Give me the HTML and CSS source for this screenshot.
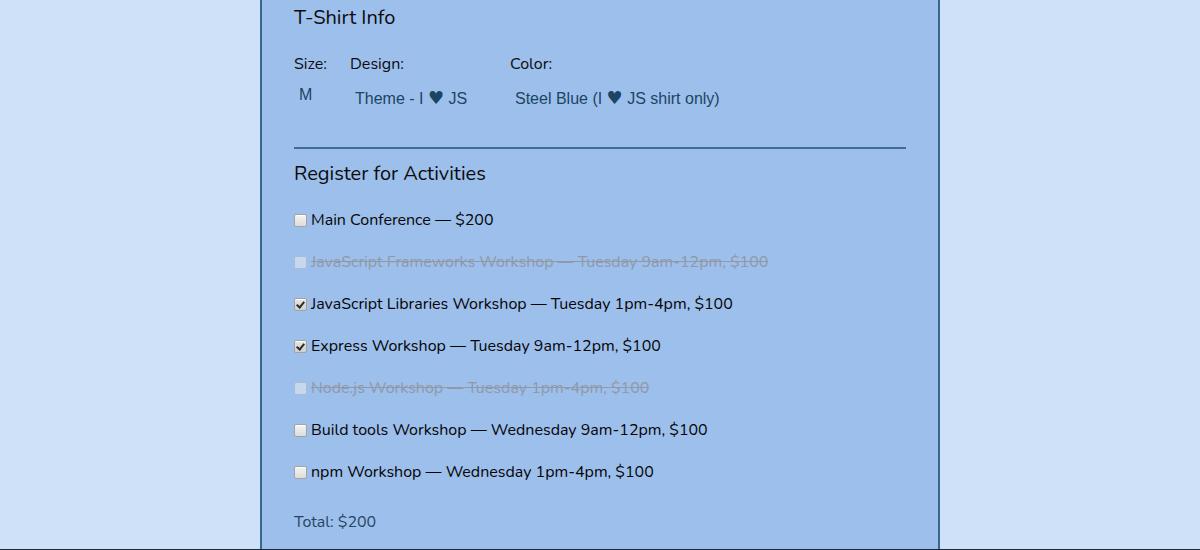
FILE: index.html
```html
<!DOCTYPE html>
<html>
<head>
<meta charset="utf-8">
<link rel="stylesheet" href="styles.css">
</head>
<body>
<div class="page">
  <form class="panel">
    <section class="shirt">
      <h2 class="legend">T-Shirt Info</h2>
      <div class="fields">
        <div class="field f-size">
          <span class="label">Size:</span>
          <span class="value v-size">M</span>
        </div>
        <div class="field f-design">
          <span class="label">Design:</span>
          <span class="value">Theme - I <span class="heart">♥</span> JS</span>
        </div>
        <div class="field f-color">
          <span class="label">Color:</span>
          <span class="value">Steel Blue (I <span class="heart">♥</span> JS shirt only)</span>
        </div>
      </div>
    </section>
    <hr class="rule">
    <section class="activities">
      <h2 class="legend">Register for Activities</h2>
      <label class="act"><span class="box"></span>Main Conference — $200</label>
      <label class="act disabled"><span class="box"></span>JavaScript Frameworks Workshop — Tuesday 9am-12pm, $100</label>
      <label class="act"><span class="box checked"></span>JavaScript Libraries Workshop — Tuesday 1pm-4pm, $100</label>
      <label class="act"><span class="box checked"></span>Express Workshop — Tuesday 9am-12pm, $100</label>
      <label class="act disabled"><span class="box"></span>Node.js Workshop — Tuesday 1pm-4pm, $100</label>
      <label class="act"><span class="box"></span>Build tools Workshop — Wednesday 9am-12pm, $100</label>
      <label class="act"><span class="box"></span>npm Workshop — Wednesday 1pm-4pm, $100</label>
      <p class="total">Total: $200</p>
    </section>
  </form>
</div>
<div class="bottom-line"></div>
</body>
</html>
```

FILE: styles.css
```css
html, body {
  margin: 0;
  padding: 0;
  height: 550px;
  overflow: hidden;
  background: #cfe0f9;
  font-family: "Nunito", Lato, "Noto Sans", sans-serif;
}

.page {
  height: 549px;
  display: flex;
  justify-content: center;
}

.bottom-line {
  height: 1px;
  background: #1f2a38;
}

.panel {
  width: 612px;
  padding: 0 32px;
  background: #9dbfec;
  border-left: 2px solid #38678b;
  border-right: 2px solid #38678b;
  box-sizing: content-box;
}

.legend {
  margin: 0;
  font-weight: 400;
  font-size: 20px;
  line-height: 24px;
  color: #0c0c0c;
}

.shirt .legend {
  padding-top: 6px;
}

.fields {
  display: flex;
  margin-top: 24px;
}

.field {
  display: flex;
  flex-direction: column;
}

.f-size { width: 56px; }
.f-design { width: 160px; }

.label {
  font-size: 16px;
  line-height: 20px;
  color: #0c0c0c;
}

.value {
  margin-top: 16px;
  padding-left: 5px;
  font-family: "Liberation Sans", Arial, "DejaVu Sans", sans-serif;
  font-size: 16px;
  line-height: 18px;
  color: #1b4563;
}

.heart {
  font-family: "DejaVu Sans", sans-serif;
  font-size: 18px;
  line-height: 0;
}

.v-size {
  margin-top: 12px;
}

.rule {
  margin: 39px 0 0 0;
  border: 0;
  height: 2px;
  background: #3e6e8f;
}

.activities .legend {
  margin-top: 13px;
}

.act {
  display: flex;
  align-items: center;
  height: 42px;
  font-size: 16px;
  color: #050505;
}

.activities .legend + .act {
  margin-top: 13px;
}

.act.disabled {
  color: #9099a6;
  text-decoration: line-through;
}

.box {
  position: relative;
  width: 11px;
  height: 11px;
  margin: 0 4px 0 0;
  border: 1px solid #a3a3a3;
  border-radius: 2px;
  background: linear-gradient(#f4f4f4, #dcdcdc);
  box-shadow: inset 0 1px 0 #fff;
  flex: none;
}

.disabled .box {
  border-color: #a9bcd6;
  background: #c7d7ee;
  box-shadow: none;
}

.box.checked {
  background: linear-gradient(#e6e6e6, #cfcfcf);
}

.box.checked::after {
  content: "";
  position: absolute;
  left: 3px;
  top: 1px;
  width: 3px;
  height: 6px;
  border: solid #2a2a2a;
  border-width: 0 2px 2px 0;
  transform: rotate(40deg);
}

.total {
  margin: 19px 0 0 0;
  font-size: 16px;
  line-height: 20px;
  color: #274663;
}
```
